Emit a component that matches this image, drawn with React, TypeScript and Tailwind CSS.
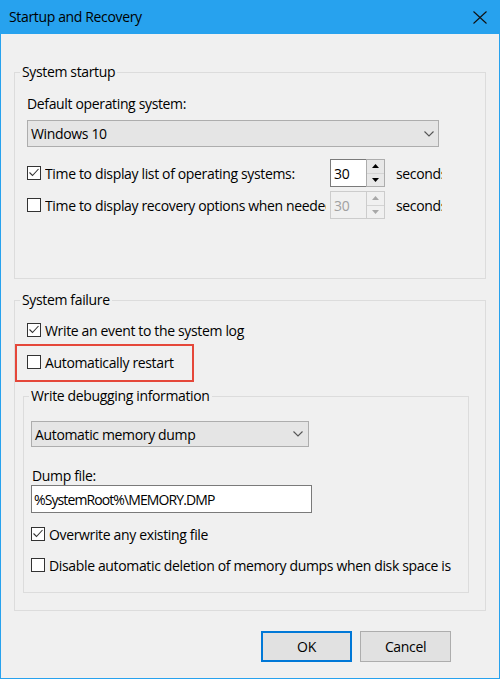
import React from "react";

function Box({ checked }: { checked?: boolean }) {
  return (
    <span className="w-[14px] h-[14px] border border-[#333333] bg-white flex items-center justify-center shrink-0">
      {checked && (
        <svg width="12" height="12" viewBox="0 0 12 12">
          <path d="M1.5 5.5 L4.5 8.5 L10.5 2" stroke="#333333" strokeWidth="1.1" fill="none" />
        </svg>
      )}
    </span>
  );
}

function Chevron() {
  return (
    <svg width="10" height="6" viewBox="0 0 10 6">
      <path d="M0.5 0.5 L5 5 L9.5 0.5" stroke="#555555" strokeWidth="1.1" fill="none" />
    </svg>
  );
}

function Tri({ up, color }: { up?: boolean; color: string }) {
  return (
    <svg width="7" height="4" viewBox="0 0 7 4">
      {up ? <path d="M0 4 L3.5 0 L7 4 Z" fill={color} /> : <path d="M0 0 L7 0 L3.5 4 Z" fill={color} />}
    </svg>
  );
}

function Spinner({ disabled }: { disabled?: boolean }) {
  const c = disabled ? "#a8a8a8" : "#000000";
  return (
    <div className="flex w-[55px] h-[28px] shrink-0">
      <div
        className={
          disabled
            ? "flex-1 border border-[#cccccc] border-r-0 bg-[#f0f0f0] pl-[3px] flex items-center text-[#a0a0a0]"
            : "flex-1 border border-[#7a7a7a] border-r-0 bg-white pl-[3px] flex items-center"
        }
      >
        30
      </div>
      <div
        className={
          disabled
            ? "w-[19px] flex flex-col border border-[#cccccc] bg-[#f0f0f0]"
            : "w-[19px] flex flex-col border border-[#adadad] bg-[#e8e8e8]"
        }
      >
        <div className="flex-1 flex items-center justify-center border-b border-[#d4d4d4]">
          <Tri up color={c} />
        </div>
        <div className="flex-1 flex items-center justify-center">
          <Tri color={c} />
        </div>
      </div>
    </div>
  );
}

export default function App() {
  return (
    <div className="w-[500px] h-[679px] bg-[#f0f0f0] border-x border-b border-[#27a2ee] flex flex-col text-black font-['Open_Sans',sans-serif] text-[14px] tracking-[-0.35px] select-none">
      <div className="h-[34px] bg-[#27a2ee] flex items-center justify-between pl-[8px] pr-[12px] shrink-0">
        <span className="leading-[20px]">Startup and Recovery</span>
        <svg width="14" height="13" viewBox="0 0 14 13">
          <path d="M0.5 0.5 L13.5 12.5 M13.5 0.5 L0.5 12.5" stroke="#111111" strokeWidth="1.1" />
        </svg>
      </div>

      <div className="flex flex-col px-[13px] pt-[28px]">
        <fieldset className="border border-[#dcdcdc] p-0 m-0 min-w-0">
          <legend className="ml-[5px] px-[2px] h-[20px] leading-[20px]">System startup</legend>
          <div className="flex flex-col pt-[12px] pl-[12px] pb-[59px]">
            <div className="h-[20px] leading-[20px]">Default operating system:</div>
            <div className="mt-[6px] w-[412px] h-[27px] border border-[#adadad] bg-[#e5e5e5] flex items-center justify-between pl-[3px] pr-[4px]">
              <span>Windows 10</span>
              <Chevron />
            </div>
            <div className="mt-[12px] h-[28px] flex items-center">
              <Box checked />
              <span className="ml-[4px] w-[281px] overflow-hidden whitespace-nowrap">Time to display list of operating systems:</span>
              <span className="ml-[4px]">
                <Spinner />
              </span>
              <span className="ml-[11px] w-[46px] overflow-hidden whitespace-nowrap">seconds</span>
            </div>
            <div className="mt-[4px] h-[28px] flex items-center">
              <Box />
              <span className="ml-[4px] w-[281px] overflow-hidden whitespace-nowrap">Time to display recovery options when needed:</span>
              <span className="ml-[4px]">
                <Spinner disabled />
              </span>
              <span className="ml-[11px] w-[46px] overflow-hidden whitespace-nowrap">seconds</span>
            </div>
          </div>
        </fieldset>

        <fieldset className="mt-[11px] border border-[#dcdcdc] p-0 m-0 min-w-0">
          <legend className="ml-[5px] px-[2px] h-[20px] leading-[20px]">System failure</legend>
          <div className="flex flex-col pt-[10px] pl-[8px] pb-[17px]">
            <div className="h-[20px] pl-[4px] flex items-center">
              <Box checked />
              <span className="ml-[4px] whitespace-nowrap">Write an event to the system log</span>
            </div>
            <div className="relative mt-[12px] h-[20px] pl-[4px] flex items-center">
              <div className="absolute left-[-8px] top-[-8px] w-[179px] h-[38px] border-2 border-[#e5473a]" />
              <Box />
              <span className="ml-[4px] whitespace-nowrap">Automatically restart</span>
            </div>

            <fieldset className="mt-[14px] w-[446px] border border-[#dcdcdc] p-0 m-0 min-w-0">
              <legend className="ml-[5px] px-[2px] h-[20px] leading-[20px]">Write debugging information</legend>
              <div className="flex flex-col pt-[15px] pl-[7px] pb-[17px]">
                <div className="w-[278px] h-[26px] border border-[#adadad] bg-[#e5e5e5] flex items-center justify-between pl-[3px] pr-[5px]">
                  <span>Automatic memory dump</span>
                  <Chevron />
                </div>
                <div className="mt-[20px] h-[18px] leading-[18px] pl-[1px]">Dump file:</div>
                <div className="w-[281px] h-[28px] border border-[#7a7a7a] bg-white flex items-center pl-[2px] whitespace-nowrap tracking-[-0.9px]">
                  %SystemRoot%\MEMORY.DMP
                </div>
                <div className="mt-[11px] h-[20px] flex items-center">
                  <Box checked />
                  <span className="ml-[4px] whitespace-nowrap">Overwrite any existing file</span>
                </div>
                <div className="mt-[11px] h-[20px] flex items-center">
                  <Box />
                  <span className="ml-[4px] w-[404px] overflow-hidden whitespace-nowrap">
                    Disable automatic deletion of memory dumps when disk space is low
                  </span>
                </div>
              </div>
            </fieldset>
          </div>
        </fieldset>

        <div className="mt-[20px] flex justify-end gap-[8px] pr-[35px]">
          <div className="w-[91px] h-[31px] border-2 border-[#0078d7] bg-[#e1e1e1] flex items-center justify-center">OK</div>
          <div className="w-[91px] h-[31px] border border-[#adadad] bg-[#e1e1e1] flex items-center justify-center">Cancel</div>
        </div>
      </div>
    </div>
  );
}
